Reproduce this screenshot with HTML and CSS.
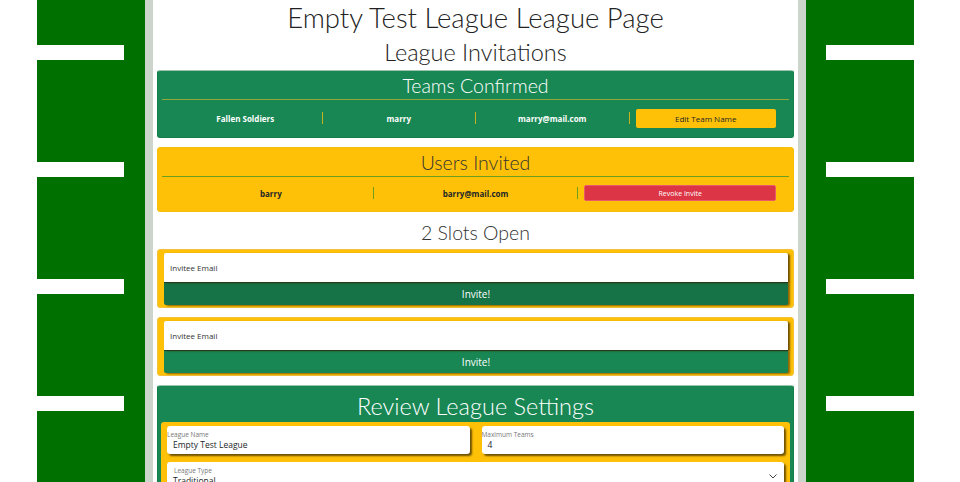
FILE: index.html
```html
<!DOCTYPE html>
<html lang="en">
<head>
<meta charset="utf-8">
<title>Empty Test League League Page</title>
<link rel="stylesheet" href="styles.css">
</head>
<body>
<div class="page">
  <aside class="field field-left"></aside>
  <main class="board">
    <h1 class="title">Empty Test League League Page</h1>
    <h2 class="subtitle">League Invitations</h2>

    <section class="card card-green">
      <h3 class="card-title">Teams Confirmed</h3>
      <hr class="rule rule-yellow">
      <div class="row">
        <div class="cell strong light">Fallen Soldiers</div>
        <span class="vsep vsep-yellow"></span>
        <div class="cell strong light">marry</div>
        <span class="vsep vsep-yellow"></span>
        <div class="cell strong light">marry@mail.com</div>
        <span class="vsep vsep-yellow"></span>
        <div class="cell"><button class="btn btn-edit">Edit Team Name</button></div>
      </div>
    </section>

    <section class="card card-yellow">
      <h3 class="card-title dark">Users Invited</h3>
      <hr class="rule rule-green">
      <div class="row">
        <div class="cell strong">barry</div>
        <span class="vsep vsep-green"></span>
        <div class="cell strong">barry@mail.com</div>
        <span class="vsep vsep-green"></span>
        <div class="cell"><button class="btn btn-revoke">Revoke Invite</button></div>
      </div>
    </section>

    <h3 class="slots">2 Slots Open</h3>

    <form class="invite">
      <input class="invite-input" type="email" placeholder="Invitee Email">
      <button class="invite-btn invite-btn-active" type="button">Invite!</button>
    </form>
    <form class="invite">
      <input class="invite-input" type="email" placeholder="Invitee Email">
      <button class="invite-btn" type="button">Invite!</button>
    </form>

    <section class="card card-green settings">
      <h3 class="settings-title">Review League Settings</h3>
      <div class="settings-box">
        <div class="settings-grid">
          <div class="fld">
            <span class="fld-label flush">League Name</span>
            <span class="fld-value">Empty Test League</span>
          </div>
          <div class="fld">
            <span class="fld-label flush">Maximum Teams</span>
            <span class="fld-value">4</span>
          </div>
          <div class="fld fld-wide fld-select">
            <span class="fld-label">League Type</span>
            <span class="fld-value">Traditional</span>
            <svg class="chev" width="8" height="5" viewBox="0 0 8 5"><path d="M0.5 0.5 L4 4 L7.5 0.5" fill="none" stroke="#444" stroke-width="1"/></svg>
          </div>
          <div class="fld fld-wide fld-select">
            <span class="fld-label">Scoring Type</span>
            <span class="fld-value">Standard</span>
            <svg class="chev" width="8" height="5" viewBox="0 0 8 5"><path d="M0.5 0.5 L4 4 L7.5 0.5" fill="none" stroke="#444" stroke-width="1"/></svg>
          </div>
        </div>
      </div>
      <button class="btn btn-start" type="button">Start League</button>
    </section>
  </main>
  <aside class="field field-right"></aside>
</div>
</body>
</html>
```
FILE: styles.css
```css
html, body {
  margin: 0;
  padding: 0;
  background: #fff;
}
::-webkit-scrollbar { width: 9px; }
::-webkit-scrollbar-track { background: #f1f1f1; }
::-webkit-scrollbar-thumb { background: #c1c1c1; }

body {
  font-family: "Open Sans", "Noto Sans", "Liberation Sans", sans-serif;
  color: #212529;
}
.page {
  display: flex;
  padding: 0 37px;
  min-height: 620px;
}
.field {
  width: 108px;
  flex: none;
  background-color: #007000;
  background-image: repeating-linear-gradient(to bottom, transparent 0 45px, #fff 45px 60px, transparent 60px 117px);
  background-size: 87px 117px;
  background-repeat: repeat-y;
}
.field-left { background-position: left top; }
.field-right { background-size: 88px 117px; background-position: right top; }

.board {
  width: 637px;
  flex: none;
  border-left: 8px solid #ccd5cc;
  border-right: 8px solid #ccd5cc;
  padding: 0 4px;
  background: #fff;
}
.title, .subtitle, .card-title, .slots, .settings-title {
  font-family: Lato, "Open Sans", sans-serif;
  font-weight: 300;
}
.title {
  margin: 0;
  font-size: 27.5px;
  line-height: 36px;
  text-align: center;
  color: #222;
}
.subtitle {
  margin: 0;
  font-size: 23.5px;
  line-height: 32px;
  text-align: center;
  color: #222;
}
.card {
  border-radius: 3px;
  margin-top: 2px;
  padding: 2px 4px 9px;
  border: 1px solid #1a7f4f;
}
.card + .card { margin-top: 9px; }
.card-green { background: #198754; color: #fff; border-color: #148049; border-top-color: #9cc4ac; }
.card-yellow { background: #ffc107; border-color: #f6bd0a; padding-bottom: 10px; }
.card-title {
  margin: 0;
  font-size: 19.5px;
  line-height: 25px;
  text-align: center;
}
.card-title.dark { color: #333; }
.rule {
  margin: 1px 0 0;
  border: 0;
  height: 0;
}
.rule-yellow { border-top: 1px solid #8ea83c; }
.rule-green { border-top: 1px solid #6d9f1e; }
.row {
  display: flex;
  align-items: center;
  margin: 8px 7px 0;
  min-height: 20px;
}
.card-yellow .row { margin-top: 8px; min-height: 16px; }
.cell {
  flex: 1 1 0;
  text-align: center;
  padding: 0 6px;
  font-size: 8px;
}
.strong { font-weight: 700; }
.light { color: #fff; }
.vsep { width: 1px; height: 12px; flex: none; }
.vsep-yellow { background: #c5b21c; }
.vsep-green { background: #6d9f1e; }

.btn {
  font-family: inherit;
  border: 0;
  border-radius: 2px;
  display: block;
  width: 100%;
  cursor: pointer;
}
.btn-edit {
  background: #ffc107;
  color: #212529;
  font-size: 8px;
  height: 19px;
}
.btn-revoke {
  background: #dc3545;
  color: #fff;
  font-size: 7px;
  height: 16px;
  border: 1px solid #e8596a;
}

.slots {
  margin: 7px 0 0;
  font-size: 19.5px;
  line-height: 28px;
  text-align: center;
  color: #333;
}
.invite {
  margin: 2px 0 0;
  background: #ffc107;
  border-radius: 3px;
  border: 1px solid #f3c23a;
  padding: 3px 5px 2px 6px;
  display: flex;
  flex-direction: column;
}
.invite + .invite { margin-top: 9px; }
.invite-input {
  font-family: inherit;
  height: 29px;
  box-sizing: border-box;
  border: 0;
  border-radius: 2px 2px 0 0;
  padding: 0 6px;
  font-size: 8px;
  background: #fff;
  box-shadow: 2px 1px 2px rgba(60, 40, 0, 0.75);
  position: relative;
  z-index: 1;
}
.invite-input::placeholder { color: #333; }
.invite-btn {
  font-family: inherit;
  height: 23px;
  border: 0;
  border-top: 1px solid #0e4d2e;
  background: #198754;
  color: #fff;
  font-size: 10px;
  border-radius: 0 0 2px 2px;
  box-shadow: 2px 1px 2px rgba(60, 40, 0, 0.6);
}
.invite-btn-active { background: #157347; }

.settings {
  margin-top: 9px;
  padding: 4px 3px 10px;
}
.settings-title {
  margin: 0;
  font-size: 23.5px;
  line-height: 32px;
  text-align: center;
}
.settings-box {
  background: #ffc107;
  border-radius: 3px;
  padding: 4px 6px 6px 6px;
}
.settings-grid {
  display: grid;
  grid-template-columns: 1fr 1fr;
  gap: 8px 12px;
}
.fld {
  background: #fff;
  color: #212529;
  border-radius: 3px;
  height: 28px;
  box-shadow: 2px 2px 2px rgba(70, 50, 0, 0.8);
  display: flex;
  flex-direction: column;
  justify-content: center;
  position: relative;
}
.fld-wide { grid-column: 1 / span 2; }
.fld-label {
  font-size: 6.5px;
  color: #777;
  line-height: 9px;
  padding-left: 7px;
}
.fld-label.flush { padding-left: 0; }
.fld-value {
  font-size: 8.5px;
  line-height: 12px;
  padding-left: 6px;
}
.chev {
  position: absolute;
  right: 7px;
  top: 12px;
}
.btn-start {
  margin-top: 10px;
  background: #ffc107;
  color: #212529;
  font-size: 11px;
  height: 26px;
}
```
